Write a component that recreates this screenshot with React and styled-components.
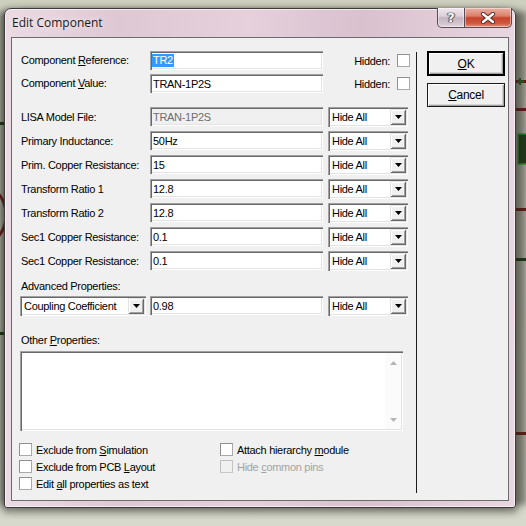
import React from 'react';
import styled, { createGlobalStyle } from 'styled-components';

const GlobalStyle = createGlobalStyle`
  html, body {
    margin: 0;
    padding: 0;
  }
  body {
    background: #d3d4c6;
    font-family: "Liberation Sans", Arial, sans-serif;
  }
`;

const Desktop = styled.div`
  position: relative;
  width: 526px;
  height: 526px;
  overflow: hidden;
  box-sizing: border-box;
  padding: 8px 0 0 4px;
  background: linear-gradient(#cdcfbf, #d8d9cd);
`;

const Wires = styled.svg`
  position: absolute;
  left: 0;
  top: 0;
`;

const Window = styled.div`
  position: relative;
  width: 512px;
  height: 500px;
  box-sizing: border-box;
  display: flex;
  flex-direction: column;
  padding: 0 6px 6px;
  border: 1px solid #3b3b3b;
  border-radius: 7px 7px 3px 3px;
  background: linear-gradient(90deg, #eadbe3 0%, #dec8d4 22%, #e5d0dc 48%, #d9c1ce 70%, #e8d6e0 100%);
  box-shadow:
    0 3px 7px 2px rgba(25, 25, 15, 0.45),
    14px 0 6px -3px rgba(50, 50, 40, 0.5),
    -8px 0 6px -3px rgba(50, 50, 40, 0.5),
    inset 0 0 0 1px rgba(255, 255, 255, 0.6);
`;

const TitleBar = styled.div`
  height: 28px;
  display: flex;
  justify-content: space-between;
  align-items: flex-start;
`;

const Title = styled.div`
  padding: 6px 0 0 1px;
  font-family: "Open Sans", "Noto Sans", sans-serif;
  font-size: 12px;
  line-height: 16px;
  color: #1a1a1a;
  text-shadow: 0 0 6px rgba(255, 255, 255, 0.9);
`;

const CaptionButtons = styled.div`
  display: flex;
  margin: -1px -3px 0 0;
`;

const CaptionButton = styled.div`
  height: 20px;
  width: ${p => (p.$close ? 47 : 28)}px;
  box-sizing: border-box;
  display: flex;
  align-items: center;
  justify-content: center;
  border: 1px solid #5b4953;
  border-top: none;
  border-left: ${p => (p.$close ? 'none' : '1px solid #5b4953')};
  border-radius: ${p => (p.$close ? '0 0 5px 0' : '0 0 0 5px')};
  background: ${p =>
    p.$close
      ? 'linear-gradient(#eab0a4, #dc806c 42%, #c6422b 52%, #cf5840 80%, #e1917a)'
      : 'linear-gradient(#f1e8ee, #ddd0d9 42%, #c4b4c0 52%, #d2c4ce 80%, #e2d6de)'};
  box-shadow: inset 0 0 0 1px rgba(255, 255, 255, 0.45);
`;

const HelpGlyph = styled.span`
  font-family: "DejaVu Sans", sans-serif;
  font-weight: bold;
  font-size: 13px;
  color: #fff;
  line-height: 1;
  text-shadow: 0 0 1px #333, 0 0 1px #333, 1px 0 1px #555, -1px 0 1px #555;
`;

const Client = styled.div`
  flex: 1;
  display: flex;
  border: 1px solid #6c6c6c;
  background: #f0f0f0;
  color: #000;
  font-size: 11px;
  letter-spacing: -0.3px;
`;

const MainPane = styled.div`
  width: 404px;
  box-sizing: border-box;
  padding: 13px 0 0 8px;
  display: flex;
  flex-direction: column;
`;

const Divider = styled.div`
  width: 1px;
  margin: 14px 0 7px;
  background: #1c1c1c;
`;

const ButtonPane = styled.div`
  padding: 13px 0 0 10px;
  display: flex;
  flex-direction: column;
  gap: 7px;
`;

const PushButton = styled.div`
  width: 78px;
  height: ${p => (p.$primary ? 25 : 24)}px;
  box-sizing: border-box;
  display: flex;
  align-items: center;
  justify-content: center;
  background: #f0f0f0;
  border: ${p => (p.$primary ? '2px solid #000' : '1px solid #1a1a1a')};
  box-shadow: inset 1px 1px #fff, inset -1px -1px #a0a0a0, inset -2px -2px #d4d4d4;
  font-size: 12px;
`;

const FieldGrid = styled.div`
  display: grid;
  grid-template-columns: 125px 173px 80px;
  column-gap: 5px;
  grid-auto-rows: ${p => p.$row}px;
  row-gap: 4px;
  align-items: center;
  margin-top: ${p => p.$gap || 0}px;
`;

const Label = styled.div`
  padding-left: 1px;
  line-height: 13px;
  white-space: nowrap;
  margin-top: ${p => p.$gap || 0}px;
`;

const U = styled.span`
  text-decoration: underline;
  text-underline-offset: 1px;
`;

const TextBox = styled.div`
  align-self: start;
  height: 19px;
  box-sizing: border-box;
  padding: 0 3px;
  display: flex;
  align-items: center;
  background: ${p => (p.$disabled ? '#f0f0f0' : '#fff')};
  color: ${p => (p.$disabled ? '#6d6d6d' : '#000')};
  box-shadow: inset 1px 1px #a0a0a0, inset 2px 2px #696969, inset -1px -1px #fff, inset -2px -2px #e3e3e3;
  white-space: nowrap;
`;

const Selected = styled.span`
  background: #3399ff;
  color: #fff;
  line-height: 13px;
  padding: 0 1px;
  margin-left: -1px;
`;

const HiddenCell = styled.div`
  display: flex;
  align-items: center;
  justify-content: flex-end;
  gap: 7px;
  margin-right: -2px;
`;

const Combo = styled.div`
  width: ${p => p.$width || 80}px;
  height: 20px;
  box-sizing: border-box;
  padding: 2px;
  display: flex;
  align-items: center;
  background: #fff;
  box-shadow: inset 1px 1px #a0a0a0, inset 2px 2px #696969, inset -1px -1px #fff, inset -2px -2px #e3e3e3;
`;

const ComboText = styled.div`
  flex: 1;
  padding-left: 2px;
  white-space: nowrap;
`;

const DropButton = styled.div`
  width: 16px;
  height: 16px;
  display: flex;
  align-items: center;
  justify-content: center;
  background: #f0f0f0;
  box-shadow: inset 1px 1px #e3e3e3, inset -1px -1px #696969, inset 2px 2px #fff, inset -2px -2px #a0a0a0;
`;

const Arrow = ({ color = '#000', up }) => (
  <svg width="7" height="4" viewBox="0 0 7 4">
    <polygon points={up ? '3.5,0 7,4 0,4' : '0,0 7,0 3.5,4'} fill={color} />
  </svg>
);

const Memo = styled.div`
  width: 383px;
  height: 80px;
  margin-top: 4px;
  box-sizing: border-box;
  padding: 2px;
  display: flex;
  justify-content: flex-end;
  background: #fff;
  box-shadow: inset 1px 1px #a0a0a0, inset 2px 2px #696969, inset -1px -1px #fff, inset -2px -2px #e3e3e3;
`;

const ScrollTrack = styled.div`
  width: 16px;
  display: flex;
  flex-direction: column;
  justify-content: space-between;
  align-items: center;
  padding: 8px 0 7px;
  background: #fbfbfb;
`;

const Options = styled.div`
  display: grid;
  grid-template-columns: 201px auto;
  grid-auto-rows: 17px;
  margin: 10px 0 0 -1px;
`;

const Option = styled.div`
  display: flex;
  align-items: center;
  gap: 4px;
  white-space: nowrap;
  color: ${p => (p.$disabled ? '#a3a3a3' : '#000')};
`;

const CheckBox = styled.div`
  width: 13px;
  height: 13px;
  flex: none;
  box-sizing: border-box;
  border: 1px solid ${p => (p.$disabled ? '#c6c6c6' : '#a9a9a9')};
  border-top-color: ${p => (p.$disabled ? '#bdbdbd' : '#8e8f8f')};
  border-left-color: ${p => (p.$disabled ? '#bdbdbd' : '#8e8f8f')};
  background: ${p => (p.$disabled ? '#f0f0f0' : '#fff')};
`;

const properties = [
  ['Primary Inductance:', '50Hz'],
  ['Prim. Copper Resistance:', '15'],
  ['Transform Ratio 1', '12.8'],
  ['Transform Ratio 2', '12.8'],
  ['Sec1 Copper Resistance:', '0.1'],
  ['Sec1 Copper Resistance:', '0.1'],
];

const HideAll = () => (
  <Combo>
    <ComboText>Hide All</ComboText>
    <DropButton><Arrow /></DropButton>
  </Combo>
);

const CloseGlyph = () => (
  <svg width="16" height="12" viewBox="0 0 16 12">
    <path d="M3 2 L13 10 M13 2 L3 10" stroke="#4a2a24" strokeWidth="4.2" strokeLinecap="round" />
    <path d="M3 2 L13 10 M13 2 L3 10" stroke="#fff" strokeWidth="2.4" strokeLinecap="round" />
  </svg>
);

export default function App() {
  return (
    <>
      <GlobalStyle />
      <Desktop>
        <Wires width="526" height="526">
          <circle cx="-28" cy="215" r="34" fill="none" stroke="#7c1414" strokeWidth="3" />
          <rect x="0" y="122" width="5" height="3" fill="#0b3d0b" />
          <rect x="0" y="332" width="5" height="3" fill="#0b3d0b" />
          <rect x="516" y="80" width="10" height="3" fill="#7d1010" />
          <path d="M520 78 v7 M517 81.5 h7" stroke="#1f7a1f" strokeWidth="2" />
          <rect x="516" y="108" width="10" height="3" fill="#7d1010" />
          <rect x="518" y="134" width="9" height="30" fill="#123d14" stroke="#27c42f" strokeWidth="1.5" />
          <rect x="516" y="208" width="10" height="3" fill="#7d1010" />
          <rect x="516" y="258" width="10" height="3" fill="#0e3a0e" />
          <rect x="516" y="432" width="10" height="3" fill="#7d1010" />
        </Wires>
        <Window>
          <TitleBar>
            <Title>Edit Component</Title>
            <CaptionButtons>
              <CaptionButton><HelpGlyph>?</HelpGlyph></CaptionButton>
              <CaptionButton $close><CloseGlyph /></CaptionButton>
            </CaptionButtons>
          </TitleBar>
          <Client>
            <MainPane>
              <FieldGrid $row={19}>
                <Label>Component <U>R</U>eference:</Label>
                <TextBox><Selected>TR2</Selected></TextBox>
                <HiddenCell>Hidden: <CheckBox /></HiddenCell>
                <Label>Component <U>V</U>alue:</Label>
                <TextBox>TRAN-1P2S</TextBox>
                <HiddenCell>Hidden: <CheckBox /></HiddenCell>
              </FieldGrid>

              <FieldGrid $row={20} $gap={14}>
                <Label>LISA Model File:</Label>
                <TextBox $disabled>TRAN-1P2S</TextBox>
                <HideAll />
                {properties.map(([name, value], i) => (
                  <React.Fragment key={i}>
                    <Label>{name}</Label>
                    <TextBox>{value}</TextBox>
                    <HideAll />
                  </React.Fragment>
                ))}
              </FieldGrid>

              <Label $gap={9}>Advanced Properties:</Label>
              <FieldGrid $row={20} $gap={3}>
                <Combo $width={126}>
                  <ComboText>Coupling Coefficient</ComboText>
                  <DropButton><Arrow /></DropButton>
                </Combo>
                <TextBox>0.98</TextBox>
                <HideAll />
              </FieldGrid>

              <Label $gap={18}>Other <U>P</U>roperties:</Label>
              <Memo>
                <ScrollTrack>
                  <Arrow up color="#b4b4b4" />
                  <Arrow color="#b4b4b4" />
                </ScrollTrack>
              </Memo>

              <Options>
                <Option><CheckBox /><span>Exclude from <U>S</U>imulation</span></Option>
                <Option><CheckBox /><span>Attach hierarchy <U>m</U>odule</span></Option>
                <Option><CheckBox /><span>Exclude from PCB <U>L</U>ayout</span></Option>
                <Option $disabled><CheckBox $disabled /><span>Hide <U>c</U>ommon pins</span></Option>
                <Option><CheckBox /><span>Edit <U>a</U>ll properties as text</span></Option>
              </Options>
            </MainPane>
            <Divider />
            <ButtonPane>
              <PushButton $primary><span><U>O</U>K</span></PushButton>
              <PushButton><span><U>C</U>ancel</span></PushButton>
            </ButtonPane>
          </Client>
        </Window>
      </Desktop>
    </>
  );
}
